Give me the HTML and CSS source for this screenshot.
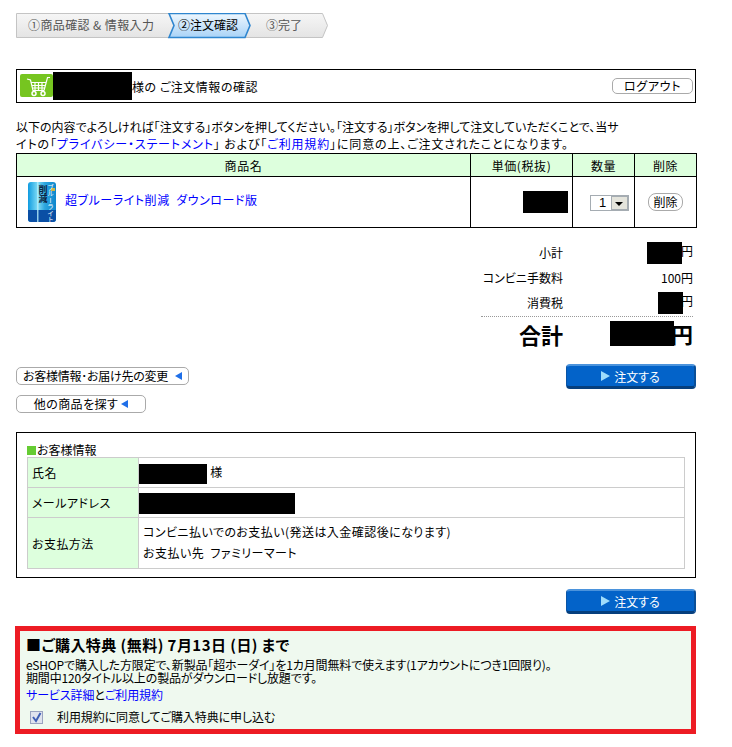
FILE: index.html
```html
<!DOCTYPE html>
<html lang="ja">
<head>
<meta charset="utf-8">
<title>ご注文情報の確認</title>
<link rel="stylesheet" href="styles.css">
</head>
<body>
<main class="page">
  <svg class="steps" width="318" height="26" viewBox="0 0 318 26">
    <defs>
      <linearGradient id="g" x1="0" y1="0" x2="0" y2="1"><stop offset="0" stop-color="#f6f6f6"/><stop offset="1" stop-color="#e4e4e4"/></linearGradient>
      <linearGradient id="b" x1="0" y1="0" x2="0" y2="1"><stop offset="0" stop-color="#eef7fe"/><stop offset="1" stop-color="#a9d3f7"/></linearGradient>
    </defs>
    <path d="M.5.5H306.500L311.500 12.500L306.500 24.500H.5Z" fill="url(#g)" stroke="#c4c4c4"/>
    <path d="M153 .5H229L234 12.500L229 24.500H153L158 12.500Z" fill="url(#b)" stroke="#2f86cf" stroke-width="1.600"/>
    <text class="step-text muted wide-text" x="12" y="17">①商品確認 &amp; 情報入力</text>
    <text class="step-text" x="162" y="17">②注文確認</text>
    <text class="step-text muted" x="250" y="17">③完了</text>
  </svg>

  <header class="titlebar">
    <svg class="cart" width="33" height="24" viewBox="0 0 33 24">
      <rect width="33" height="23" rx="2" fill="#76c520"/>
      <path d="M7 5L10.500 6L13 16.500H24M11 8.500H26M11.800 11.500H25.200M12.500 14H24.600M15 8.500V16M18.500 8.500V16M22 8.500V16M30 3.500H27.500L24 16.500" fill="none" stroke="#fff" stroke-width="1.200"/>
      <circle cx="14" cy="19.500" r="2" fill="none" stroke="#fff" stroke-width="1.500"/>
      <circle cx="23" cy="19.500" r="2" fill="none" stroke="#fff" stroke-width="1.500"/>
    </svg>
    <span class="redact redact-title"></span>
    <h1 class="title">様の ご注文情報の確認</h1>
    <button class="pill logout">ログアウト</button>
  </header>

  <p class="intro">以下の内容でよろしければ「注文する」ボタンを押してください。「注文する」ボタンを押して注文していただくことで、当サ<br><span class="intro-second">イトの「<a href="#">プライバシー・ステートメント</a>」 および「<a href="#">ご利用規約</a>」に同意の上、ご注文されたことになります。</span></p>

  <table class="cart-table">
    <colgroup><col class="c-name"><col class="c-price"><col class="c-qty"><col class="c-del"></colgroup>
    <thead><tr><th>商品名</th><th>単価(税抜)</th><th>数量</th><th>削除</th></tr></thead>
    <tbody><tr>
      <td>
        <div class="product">
          <svg class="box" width="28" height="40" viewBox="0 0 28 40">
            <defs><linearGradient id="p" x1="0" y1="0" x2="1" y2="0"><stop offset="0" stop-color="#0f9be0"/><stop offset=".35" stop-color="#7fdcf5"/><stop offset=".6" stop-color="#2da6de"/><stop offset="1" stop-color="#0d86cc"/></linearGradient></defs>
            <rect width="28" height="40" rx="3" fill="url(#p)"/>
            <path d="M0 28H28V37a3 3 0 0 1-3 3H3a3 3 0 0 1-3-3Z" fill="#0a4fa5"/>
            <rect x="9" y="0" width="1.500" height="40" fill="#b5ecfa" opacity=".8"/>
            <rect x="23" y="6" width="4" height="3" fill="#c9b64a"/>
            <text class="box-a" x="15" y="3">削減</text>
            <text class="box-b" x="22.500" y="2">ブルーライト</text>
          </svg>
          <a class="product-link" href="#">超ブルーライト削減&nbsp;&nbsp;ダウンロード版</a>
        </div>
      </td>
      <td class="price"><span class="redact redact-price"></span></td>
      <td class="center">
        <span class="select"><span class="select-val">1</span><span class="select-arrow"></span></span>
      </td>
      <td class="center"><button class="pill del">削除</button></td>
    </tr></tbody>
  </table>

  <section class="summary">
    <div class="sum-row"><span class="sum-label">小計</span><span class="sum-val"><span class="redact r-sub"></span>円</span></div>
    <div class="sum-row"><span class="sum-label">コンビニ手数料</span><span class="sum-val">100円</span></div>
    <div class="sum-row"><span class="sum-label">消費税</span><span class="sum-val"><span class="redact r-tax"></span>円</span></div>
    <div class="sum-row total"><span class="sum-label">合計</span><span class="sum-val"><span class="redact r-total"></span>円</span></div>
  </section>

  <section class="actions">
    <div class="links">
      <button class="pill back wide">お客様情報･お届け先の変更<i class="tri-left"></i></button>
      <button class="pill back narrow">他の商品を探す<i class="tri-left"></i></button>
    </div>
    <button class="order"><i class="tri-right"></i>注文する</button>
  </section>

  <section class="customer">
    <h2 class="cust-title"><i class="sq"></i>お客様情報</h2>
    <table class="cust-table">
      <tr class="r1"><th>氏名</th><td><span class="redact r-name"></span> 様</td></tr>
      <tr class="r2"><th>メールアドレス</th><td><span class="redact r-mail"></span></td></tr>
      <tr class="r3"><th>お支払方法</th><td>コンビニ払いでのお支払い(発送は入金確認後になります)<br>お支払い先&nbsp;&nbsp;ファミリーマート</td></tr>
    </table>
  </section>

  <div class="order-row"><button class="order"><i class="tri-right"></i>注文する</button></div>

  <section class="bonus">
    <h2 class="bonus-title">■ご購入特典 (無料) 7月13日 (日) まで</h2>
    <p class="bonus-text">eSHOPで購入した方限定で、新製品「超ホーダイ」を1カ月間無料で使えます(1アカウントにつき1回限り)。<br>期間中120タイトル以上の製品がダウンロードし放題です。</p>
    <p class="bonus-links"><a href="#">サービス詳細</a>と<a href="#">ご利用規約</a></p>
    <label class="agree"><span class="check"><svg width="11" height="11" viewBox="0 0 11 11"><path d="M2 5L5 9L9.500 1" fill="none" stroke="#3f5fb5" stroke-width="2"/></svg></span>利用規約に同意してご購入特典に申し込む</label>
  </section>
</main>
</body>
</html>
```

FILE: styles.css
```css
* { box-sizing: border-box; }
html, body { margin: 0; padding: 0; background: #fff; }
body {
  font-family: "Noto Sans CJK JP", "Liberation Sans", sans-serif;
  font-size: 12px;
  color: #000;
  font-feature-settings: "palt";
}
a { color: #00f; text-decoration: none; }
i { display: inline-block; font-style: normal; }

.page { width: 680px; margin-left: 16px; padding-top: 13px; }

.steps { display: block; }
.step-text { font-size: 12px; fill: #000; font-family: "Noto Sans CJK JP", sans-serif; }
.step-text.muted { fill: #555; }
.wide-text { letter-spacing: .4px; }

.redact { display: inline-block; background: #000; vertical-align: middle; }

.titlebar {
  display: flex; align-items: center; height: 34px; margin-top: 30px;
  padding: 0 2px 0 3px; border: 1px solid #000; position: relative;
}
.cart { flex: none; }
.redact-title { width: 79px; height: 28px; flex: none; }
.title { font-size: 12px; font-weight: 400; margin: 0; flex: 1; letter-spacing: .5px; }
.pill {
  font: inherit; font-size: 12px; color: #000; background: #fff;
  border: 1px solid #aaa; border-radius: 5px; padding: 0; line-height: 14px;
}
.logout { width: 81px; height: 16px; letter-spacing: .7px; }

.intro { margin: 15px 0 0; line-height: 17px; height: 34px; white-space: nowrap; }
.intro-second { letter-spacing: .85px; }

.cart-table { width: 680px; border-collapse: collapse; table-layout: fixed; margin-top: 1px; }
.c-name { width: 454px; } .c-price { width: 102px; } .c-qty { width: 62px; } .c-del { width: 62px; }
.cart-table th, .cart-table td { border: 1px solid #000; padding: 0; }
.cart-table th { background: #dfd; font-weight: 400; height: 23px; letter-spacing: .6px; }
.cart-table td { height: 51px; }
.product { display: flex; align-items: center; gap: 9px; padding-left: 11px; }
.box { flex: none; }
.box-a { font-size: 9px; fill: #0c2340; font-weight: 700; writing-mode: vertical-rl; }
.box-b { font-size: 6.500px; fill: #fff; writing-mode: vertical-rl; font-feature-settings: normal; }
.product-link { letter-spacing: .55px; padding-bottom: 5px; }
.price { text-align: right; padding-right: 4px !important; }
.redact-price { width: 45px; height: 22px; }
.center { text-align: center; }
.select {
  display: inline-flex; width: 39px; height: 16px; border: 1px solid #a5acb2;
  align-items: stretch; vertical-align: middle; background: #fff; margin-left: 12px;
}
.select-val { flex: 1; font-size: 13px; line-height: 14px; padding-left: 3px; font-family: "Liberation Sans", sans-serif; }
.select-arrow { width: 17px; background: #e4e4dc; border: 1px solid #a5acb2; position: relative; }
.select-arrow::after {
  content: ""; position: absolute; left: 3px; top: 5px;
  border: 4px solid transparent; border-top: 4px solid #000; border-bottom: 0;
}
.del { width: 35px; height: 18px; border-radius: 8px; }

.summary { margin-top: 12px; padding-left: 465px; }
.sum-row { display: flex; align-items: center; height: 25px; }
.sum-label { width: 82px; text-align: right; }
.sum-val { flex: 1; text-align: right; padding-right: 3px; }
.r-sub { width: 35px; height: 22px; margin-right: -1px; }
.r-tax { width: 25px; height: 22px; margin-right: -2px; }
.total {
  height: 38px; border-top: 1px dotted #999; margin: 1px 3px 0 0;
  font-size: 22px; font-weight: 700; align-items: flex-start; padding-top: 4px; line-height: 25px;
}
.total .sum-val { padding-right: 0; }
.total .sum-label { padding-top: 1px; }
.r-total { width: 64px; height: 25px; margin-right: -3px; position: relative; vertical-align: top; }

.actions { display: flex; justify-content: space-between; align-items: flex-start; margin-top: 10px; }
.links { display: flex; flex-direction: column; align-items: flex-start; gap: 10px; padding-top: 3px; }
.back { height: 18px; display: flex; align-items: center; justify-content: center; }
.wide { width: 173px; gap: 7px; letter-spacing: -.25px; }
.narrow { width: 130px; gap: 3px; letter-spacing: .45px; }
.tri-left { width: 0; height: 0; border: 4.5px solid transparent; border-right: 7px solid #1f6fe8; border-left: 0; }
.order {
  width: 130px; height: 25px; font: inherit; color: #fff; padding: 0;
  background: #0363c9; border: 1px solid #0a54a5; border-bottom: 3px solid #063f7d;
  border-right: 2px solid #0a4f98; border-top: 2px solid #4b93dc; border-radius: 4px;
  display: flex; align-items: center; justify-content: center; gap: 4px;
}
.tri-right { width: 0; height: 0; border: 5px solid transparent; border-left: 9px solid #9fdcfb; border-right: 0; }

.customer { margin-top: 19px; height: 146px; border: 1px solid #000; padding: 10px 10px 0; }
.cust-title { font-size: 12px; font-weight: 400; margin: 0; line-height: 14px; }
.sq { width: 9px; height: 9px; background: #6c3; margin-right: 1px; }
.cust-table { width: 658px; border-collapse: collapse; table-layout: fixed; letter-spacing: .45px; }
.cust-table th, .cust-table td { border: 1px solid #ccc; font-weight: 400; text-align: left; padding: 0 0 0 4px; }
.cust-table th { width: 111px; background: #dfd; }
.r1, .r2 { height: 30px; }
.r3 { height: 51px; }
.cust-table td { line-height: 21px; }
.r3 td { padding-bottom: 3px; }
.r-name { width: 68px; height: 20px; margin-left: -4px; }
.r-mail { width: 156px; height: 21px; margin-left: -4px; }

.order-row { display: flex; justify-content: flex-end; margin-top: 11px; }

.bonus {
  margin: 12px 0 0 -1px; width: 681px; height: 108px;
  border: 5px solid #ed1c24; background: #eff9ef; padding: 4px 6px 0;
}
.bonus-title { font-size: 15px; font-weight: 700; margin: 0; line-height: 20px; letter-spacing: .45px; }
.bonus-text { margin: 3px 0 0; font-size: 12px; letter-spacing: -.15px; line-height: 13px; white-space: nowrap; }
.bonus-links { margin: 3px 0 0; line-height: 16px; letter-spacing: -.1px; }
.agree { display: flex; align-items: center; gap: 14px; margin-top: 6px; padding-left: 4px; line-height: 16px; letter-spacing: -.1px; }
.check {
  width: 13px; height: 13px; border: 1px solid #9aa3c0; background: #dfe3ee;
  display: flex; align-items: center; justify-content: center;
}
```
